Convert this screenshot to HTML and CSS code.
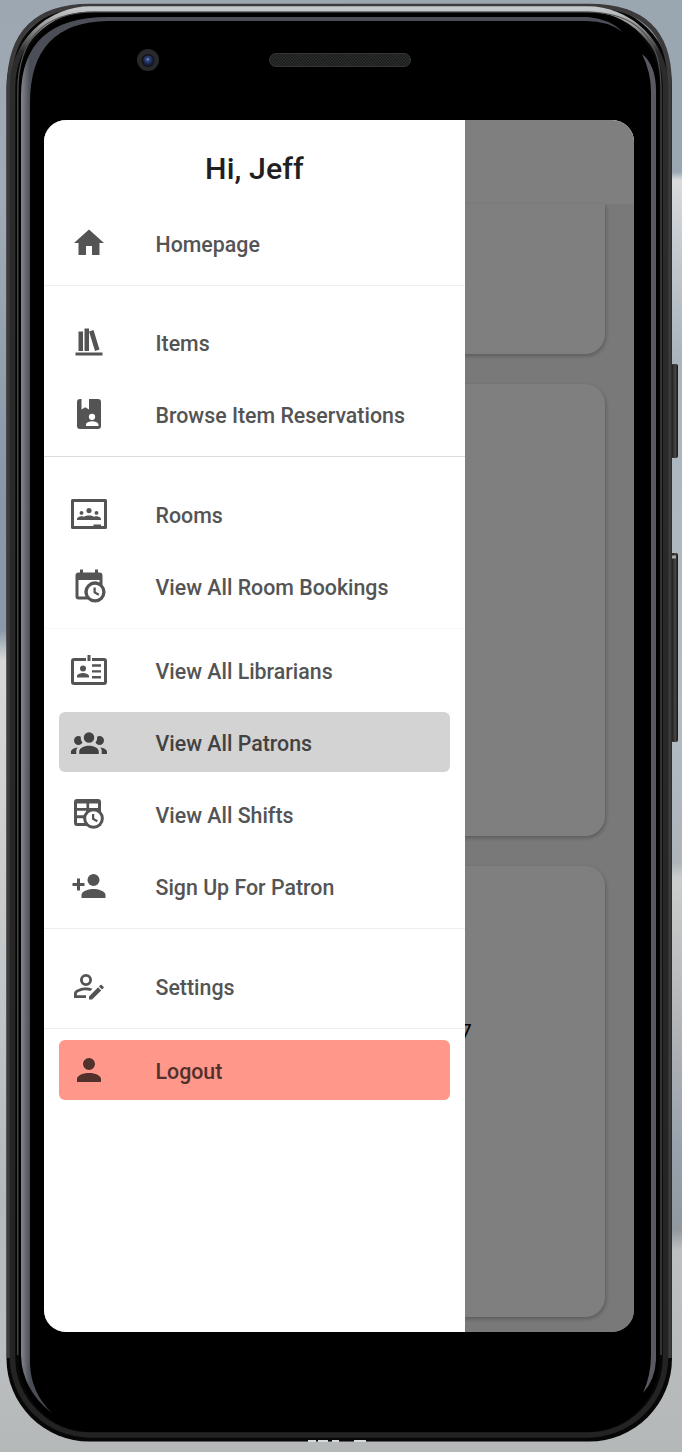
FILE: index.html
```html
<!DOCTYPE html>
<html lang="en">
<head>
<meta charset="utf-8">
<title>Library menu</title>
<link rel="stylesheet" href="styles.css">
</head>
<body>
<div class="stage">
<svg class="frame" viewBox="0 0 682 1452" aria-hidden="true">
  <defs>
    <linearGradient id="rim" x1="0" y1="0" x2="0" y2="1"><stop offset="0" stop-color="#c4c8ca"/><stop offset=".012" stop-color="#999"/><stop offset=".03" stop-color="#2c2c2c"/><stop offset="1" stop-color="#232323"/></linearGradient>
    <linearGradient id="glassL" x1="21" x2="30" y1="0" y2="0" gradientUnits="userSpaceOnUse"><stop offset="0" stop-color="#85868b"/><stop offset=".5" stop-color="#686a73"/><stop offset="1" stop-color="#4c4e57"/></linearGradient>
    <pattern id="mesh" width="3" height="3" patternUnits="userSpaceOnUse"><rect width="3" height="3" fill="#292b2b"/><path d="M0 0l3 3" stroke="#151616" stroke-width=".9"/></pattern>
    <radialGradient id="lens" cx=".45" cy=".4"><stop offset="0" stop-color="#8fa3d8"/><stop offset=".3" stop-color="#33467d"/><stop offset="1" stop-color="#141d40"/></radialGradient>
    <linearGradient id="key" x1="0" x2="1" y1="0" y2="0"><stop offset="0" stop-color="#111"/><stop offset=".6" stop-color="#4a4948"/><stop offset="1" stop-color="#141414"/></linearGradient>
  </defs>
  <rect x="671" y="364" width="7" height="94" rx="2" fill="url(#key)"/>
  <rect x="671" y="553" width="7" height="189" rx="2" fill="url(#key)"/>
  <path d="M672 557h4" stroke="#aaa" stroke-width="3"/>
  <rect x="6.500" y="4" width="665.500" height="1437.500" rx="83" fill="#070707"/>
  <path d="M9 1358V86Q10 6 90 6H589Q669 6 669.500 82V1358" fill="none" stroke="#3c3a3a" stroke-width="4.500"/>
  <rect x="12.500" y="9" width="653" height="1426" rx="78" fill="none" stroke="url(#rim)" stroke-width="5.500"/>
  <path d="M17.800 1355V92Q17.800 12 95 12H586Q661 12 661 88V1355" fill="none" stroke="#505255" stroke-width="1.200"/>
  <rect x="19" y="13" width="640.500" height="1419" rx="73" fill="#000"/>
  <path d="M21 96Q21 17 108 17H588Q610 19 623 32Q608 21 586 21H108Q30 22 30 103V1364Q31 1393 52 1413Q22 1390 21 1355Z" fill="url(#glassL)"/>
  <path d="M642 54Q656 65 656 91V1360Q655 1380 643 1393Q651 1375 651 1355V92Q651 72 642 54Z" fill="#595a61"/>
  <path d="M308 1441h8M318 1441h10M332 1441h7M354 1441h12" stroke="#d8dada" stroke-width="2"/>
  <circle cx="148" cy="60" r="11" fill="#29292b"/><circle cx="148" cy="60.500" r="6.500" fill="#101114"/><circle cx="148.300" cy="60.500" r="5.300" fill="url(#lens)"/>
  <rect x="269.500" y="53.500" width="141" height="13" rx="6.500" fill="url(#mesh)" stroke="#343636"/>
</svg>
<main class="screen">
  <div class="page">
    <div class="appbar"></div>
    <div class="card first"></div>
    <div class="card"></div>
    <div class="card last"><span class="count">7</span></div>
  </div>
  <div class="scrim"></div>
  <nav class="drawer">
    <h1 class="title">Hi, Jeff</h1>
    <div class="group home">
      <a class="item"><svg class="icon" viewBox="0 0 24 24"><path d="M10 20v-6h4v6h5v-8h3L12 3 2 12h3v8z"/></svg>Homepage</a>
    </div>
    <div class="group spaced">
      <a class="item"><svg class="icon" viewBox="0 0 24 24"><path d="M9 3v15h3V3zM12 5l4 13 3-1-4-13zM5 5v13h3V5zM3 19v2h18v-2z"/></svg>Items</a>
      <a class="item"><svg class="icon" viewBox="0 0 24 24"><path fill-rule="evenodd" d="M18 2a2 2 0 0 1 2 2v16a2 2 0 0 1-2 2H6a2 2 0 0 1-2-2V4a2 2 0 0 1 2-2h1v7l2.500-1.500L12 9V2zM14 11.750a2.100 2.100 0 1 0 0 4.200 2.100 2.100 0 0 0 0-4.200M10 20h8.300v-1c0-1.400-2.800-2.100-4.150-2.100S10 17.600 10 19z"/></svg>Browse Item Reservations</a>
    </div>
    <div class="group spaced rooms strong">
      <a class="item"><svg class="icon" viewBox="0 0 24 24"><path fill-rule="evenodd" d="M23 2H1a1 1 0 0 0-1 1v18a1 1 0 0 0 1 1h22a1 1 0 0 0 1-1V3a1 1 0 0 0-1-1m-1 18h-2v-1h-5v1H2V4h20z"/><circle cx="12" cy="9.710" r="1.710"/><circle cx="7" cy="11.300" r="1.280"/><circle cx="17" cy="11.300" r="1.280"/><path d="M4 16v-.6c0-1.200 1.800-1.900 3.100-1.900.5 0 1.100.1 1.500.3.900-.5 2.200-.8 3.400-.8s2.500.3 3.400.8c.4-.2 1-.3 1.500-.3 1.300 0 3.100.7 3.100 1.900v.6z"/></svg>Rooms</a>
      <a class="item"><svg class="icon" viewBox="0 0 24 24"><path d="M15 13h1.500v2.820l2.440 1.410-.75 1.300L15 16.690zM19 8H5v11h4.670A7 7 0 0 1 19 9.670zM5 21a2 2 0 0 1-2-2V5c0-1.110.89-2 2-2h1V1h2v2h8V1h2v2h1a2 2 0 0 1 2 2v6.100A7 7 0 0 1 11.100 21zm11-9.850a4.850 4.850 0 1 0 0 9.700 4.850 4.850 0 0 0 0-9.700"/></svg>View All Room Bookings</a>
    </div>
    <div class="group people faint">
      <a class="item"><svg class="icon" viewBox="0 0 24 24"><path d="M22 4h-8v2h8v14H2V6h8V4H2a2 2 0 0 0-2 2v14a2 2 0 0 0 2 2h20a2 2 0 0 0 2-2V6a2 2 0 0 0-2-2M11 2h2v4h-2zM14 8.200h6v1.600h-6zM14 12.100h6v1.600h-6zM14 16h6v1.600h-6zM4 17v-1c0-1.400 2.700-2 4-2s4 .6 4 2v1z"/><circle cx="8" cy="11" r="2"/></svg>View All Librarians</a>
      <a class="item selected"><svg class="icon" viewBox="0 0 24 24"><path d="M12 5.500a3.500 3.500 0 1 1 0 7 3.500 3.500 0 0 1 0-7M5 8c.56 0 1.080.15 1.530.42-.15 1.430.27 2.850 1.130 3.960C7.160 13.340 6.160 14 5 14a3 3 0 0 1 0-6m14 0a3 3 0 0 1 0 6c-1.160 0-2.160-.66-2.660-1.620a5.540 5.540 0 0 0 1.130-3.960C17.920 8.150 18.440 8 19 8M5.500 18.250c0-2.070 2.910-3.750 6.500-3.750s6.500 1.680 6.500 3.750V20h-13zM0 20v-1.500c0-1.390 1.890-2.560 4.450-2.900-.59.68-.95 1.620-.95 2.650V20zm24 0h-3.500v-1.750c0-1.030-.36-1.970-.95-2.650 2.560.34 4.450 1.510 4.450 2.900z"/></svg>View All Patrons</a>
      <a class="item"><svg class="icon" viewBox="0 0 24 24"><mask id="cut"><path fill="#fff" d="M0 0h24v24H0z"/><circle cx="15" cy="15" r="6" fill="#000"/></mask><path mask="url(#cut)" fill-rule="evenodd" d="M4 2h14a2 2 0 0 1 2 2v16H4a2 2 0 0 1-2-2V4a2 2 0 0 1 2-2m0 3v3h6.300V5zm8.100 0v3H18V5zM4 9.800v3h6.300v-3zm8.100 0v3H18v-3zM4 14.800V18h6.300v-3.200z"/><circle cx="15" cy="15" r="5.900" fill="none" stroke="currentColor" stroke-width="2"/><path d="M14 12h1.500v2.820l2.440 1.410-.75 1.300L14 15.690z"/></svg>View All Shifts</a>
      <a class="item"><svg class="icon" viewBox="0 0 24 24"><path d="M15 14c-2.670 0-8 1.330-8 4v2h16v-2c0-2.670-5.330-4-8-4m-9-4V7H4v3H1v2h3v3h2v-3h3v-2m6 2a4 4 0 1 0 0-8 4 4 0 0 0 0 8"/></svg>Sign Up For Patron</a>
    </div>
    <div class="group spaced settings">
      <a class="item"><svg class="icon" viewBox="0 0 24 24"><path fill-rule="evenodd" d="M10 4a4 4 0 1 0 0 8 4 4 0 0 0 0-8m0 1.900a2.100 2.100 0 1 1 0 4.200 2.100 2.100 0 0 1 0-4.200M2 17v3h8v-1.900H3.900V17c0-.64 3.130-2.100 6.100-2.100.96 0 1.940.16 2.810.38l1.520-1.520C12.930 13.310 11.310 13 10 13c-2.670 0-8 1.330-8 4m19.700-3.650-1 1-2.050-2.050 1-1c.21-.21.56-.21.77 0l1.280 1.280c.21.21.21.560 0 .77M12 18.940l6.060-6.060 2.050 2.050L14.060 21H12z"/></svg>Settings</a>
    </div>
    <div class="group exit">
      <a class="item logout"><svg class="icon" viewBox="0 0 24 24"><path d="M12 4a4 4 0 1 1 0 8 4 4 0 0 1 0-8m0 10c4.420 0 8 1.790 8 4v2H4v-2c0-2.210 3.580-4 8-4"/></svg>Logout</a>
    </div>
  </nav>
</main>
</div>
</body>
</html>
```
FILE: styles.css
```css
* { box-sizing: border-box; }
body { margin: 0; font-family: Roboto, sans-serif; }
.stage {
  position: relative;
  width: 682px;
  height: 1452px;
  padding: 120px 48px 120px 44px;
  overflow: hidden;
  background:
    linear-gradient(#9aa6b0 0, #9aa7b2 172px, #d9dbdc 180px, #c4cacf 250px, #aab4bc 360px, #b3bcc4 700px, #adb4ba 862px, #cbcdcd 878px, #b3b5b7 1020px, #98a1ac 1150px, #91999f 1230px, #bdc0c0 1250px, #b4b8b9 1452px) right / 50% 100% no-repeat,
    linear-gradient(#9ca7b1 0, #a0abb5 200px, #8896a6 500px, #8a98a7 630px, #d8d9da 660px, #c9cbcc 900px, #b3b9be 1200px, #bcbfc1 1350px, #b4b8b9 1452px) left / 50% 100% no-repeat;
}
.frame { position: absolute; top: 0; left: 0; width: 682px; height: 1452px; }
.screen {
  position: relative;
  width: 590px;
  height: 1212px;
  border-radius: 22px;
  overflow: hidden;
}
.page { height: 100%; background: #f3f3f3; }
.appbar { height: 84px; background: #fff; }
.card {
  width: 530.500px;
  height: 452px;
  margin: 0 30px 30px;
  border-radius: 20px;
  background: #fff;
  box-shadow: 1px 2px 4px rgba(0, 0, 0, .25);
}
.card.first { height: 150px; border-radius: 0 0 20px 20px; }
.card.last { height: 451px; padding: 153px 0 0 386px; }
.count { font-size: 21px; line-height: 26px; color: #000; }
.scrim { position: absolute; inset: 0; background: rgba(0, 0, 0, .5); }
.drawer {
  position: absolute;
  inset: 0 auto 0 0;
  width: 421px;
  background: #fff;
}
.title {
  height: 94px;
  margin: 0;
  font-size: 30.300px;
  font-weight: 500;
  line-height: 97px;
  text-align: center;
  color: #202022;
  letter-spacing: .1px;
}
.group { display: flex; flex-direction: column; gap: 12px; padding: 11px 15px; border-top: 1px solid #eee; }
.group.home { padding-top: 0; border-top: 0; }
.group.spaced { padding-top: 27px; }
.group.rooms { padding-bottom: 12px; }
.group.people { padding-bottom: 12px; }
.group.settings { padding-top: 28px; }
.group.strong { border-top-color: #dcdcdc; }
.group.faint { border-top-color: #f8f8f8; }
.item {
  display: flex;
  align-items: center;
  gap: 48.500px;
  height: 60px;
  padding: 1px 12px 0;
  border-radius: 6px;
  font-size: 21.350px;
  font-weight: 500;
  color: #545454;
  white-space: nowrap;
}
.icon { width: 36px; height: 36px; margin-top: -3px; fill: currentColor; }
.rooms .item { padding-top: 2px; }
.people .item, .exit .item { padding-top: 3px; }
.selected { background: #d3d3d3; color: #424242; }
.logout { background: #ff978a; color: #52302c; }
```
